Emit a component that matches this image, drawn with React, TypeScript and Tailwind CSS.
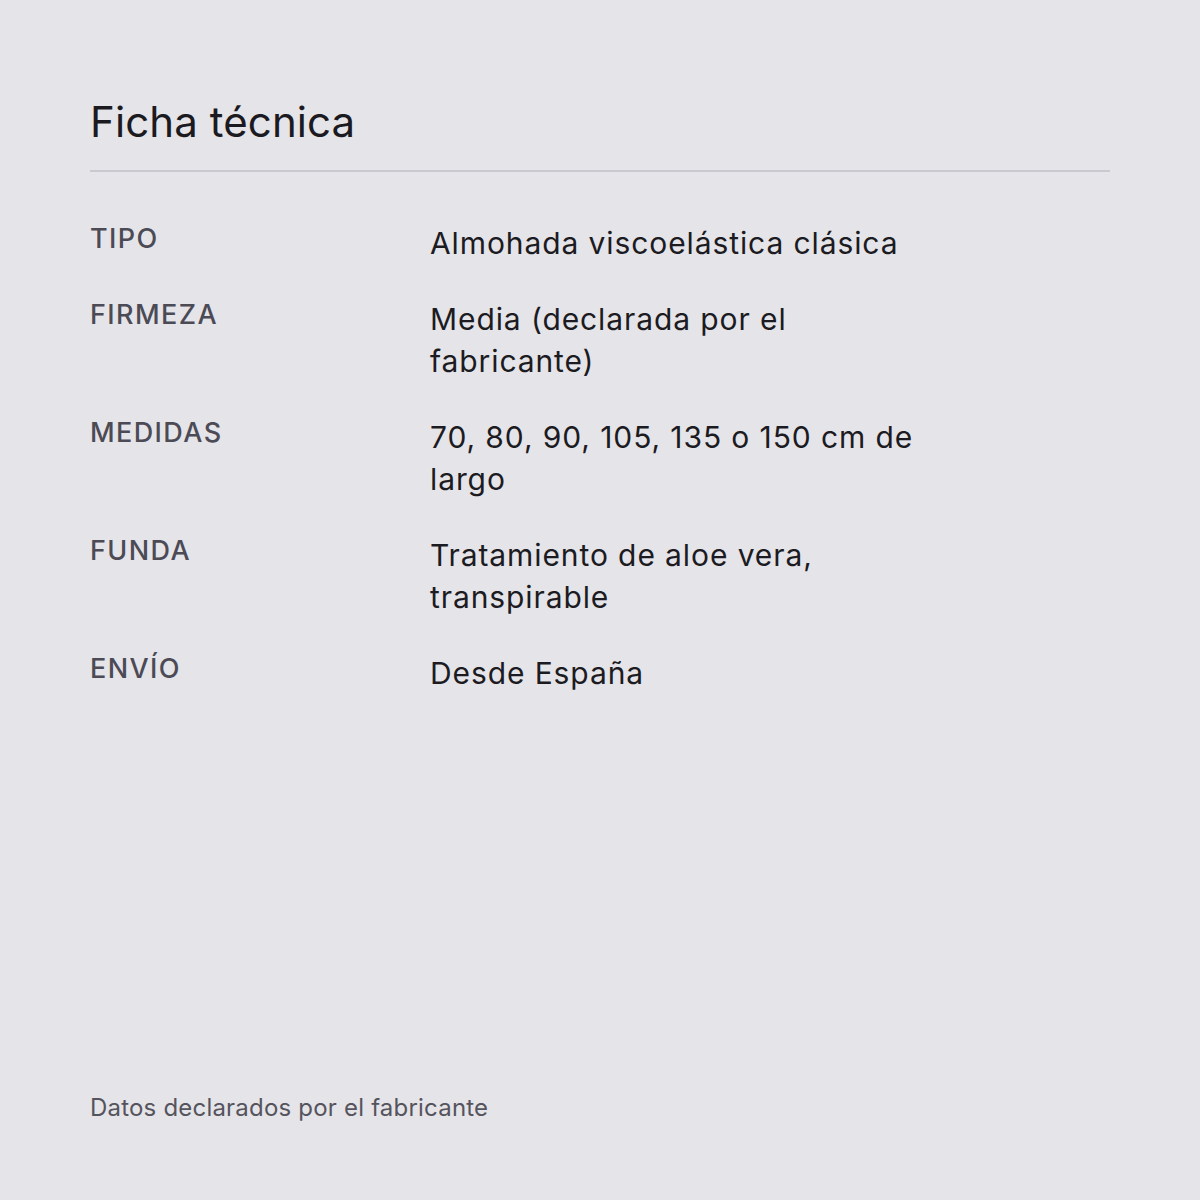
export default function App() {
  const rows: [string, string][] = [
    ["TIPO", "Almohada viscoelástica clásica"],
    ["FIRMEZA", "Media (declarada por el fabricante)"],
    ["MEDIDAS", "70, 80, 90, 105, 135 o 150 cm de largo"],
    ["FUNDA", "Tratamiento de aloe vera, transpirable"],
    ["ENVÍO", "Desde España"],
  ];
  return (
    <div
      className="w-[1200px] h-[1200px] bg-[#e5e4e9] flex flex-col px-[90px] pt-[92px] pb-[76px]"
      style={{ fontFamily: "Inter, 'Noto Sans', sans-serif" }}
    >
      <h1 className="text-[42px] leading-[60px] text-[#1b1a21] font-normal tracking-[0.1px]">Ficha técnica</h1>
      <div className="mt-[18px] h-[2px] bg-[#cac9cf]" />
      <div className="mt-[50px] flex flex-col gap-[34px]">
        {rows.map(([k, v]) => (
          <div key={k} className="flex">
            <div className="w-[340px] shrink-0 text-[27px] leading-[34px] font-medium text-[#4b4a55] tracking-[1.4px]">
              {k}
            </div>
            <div className="w-[520px] text-[30px] leading-[42px] text-[#1c1b22] tracking-[0.9px]">{v}</div>
          </div>
        ))}
      </div>
      <div className="mt-auto text-[24px] leading-[32px] text-[#55545d] tracking-[0.2px]">Datos declarados por el fabricante</div>
    </div>
  );
}
